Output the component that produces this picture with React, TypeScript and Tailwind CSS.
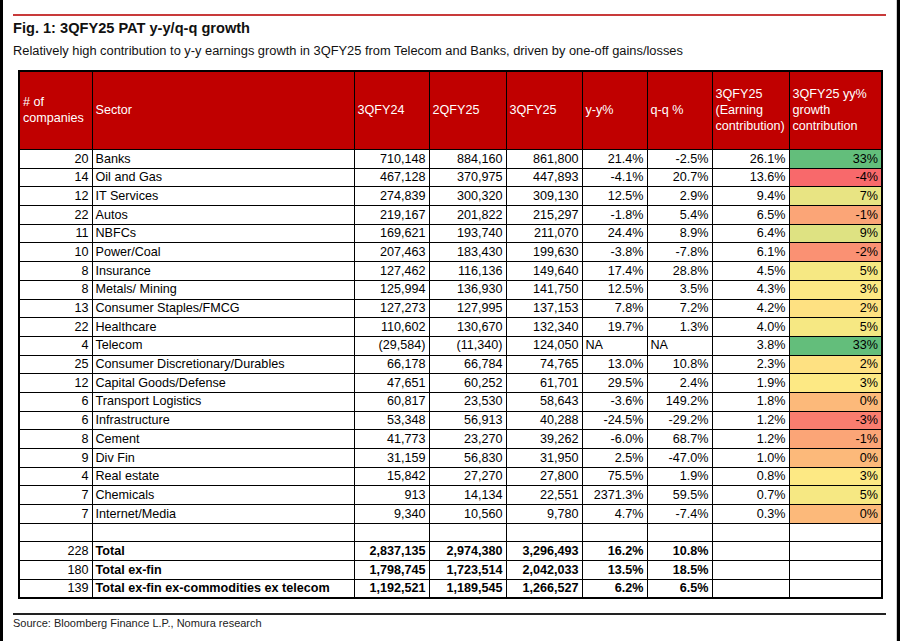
import React from 'react';

type Row = {
  n: string;
  sector: string;
  q324: string;
  q225: string;
  q325: string;
  yy: string;
  qq: string;
  earn: string;
  contrib: string;
  tone: string;
};

const rows: Row[] = [
  { n: '20', sector: 'Banks', q324: '710,148', q225: '884,160', q325: '861,800', yy: '21.4%', qq: '-2.5%', earn: '26.1%', contrib: '33%', tone: 'bg-[#63be7b]' },
  { n: '14', sector: 'Oil and Gas', q324: '467,128', q225: '370,975', q325: '447,893', yy: '-4.1%', qq: '20.7%', earn: '13.6%', contrib: '-4%', tone: 'bg-[#f8696b]' },
  { n: '12', sector: 'IT Services', q324: '274,839', q225: '300,320', q325: '309,130', yy: '12.5%', qq: '2.9%', earn: '9.4%', contrib: '7%', tone: 'bg-[#e8e483]' },
  { n: '22', sector: 'Autos', q324: '219,167', q225: '201,822', q325: '215,297', yy: '-1.8%', qq: '5.4%', earn: '6.5%', contrib: '-1%', tone: 'bg-[#fba577]' },
  { n: '11', sector: 'NBFCs', q324: '169,621', q225: '193,740', q325: '211,070', yy: '24.4%', qq: '8.9%', earn: '6.4%', contrib: '9%', tone: 'bg-[#dee282]' },
  { n: '10', sector: 'Power/Coal', q324: '207,463', q225: '183,430', q325: '199,630', yy: '-3.8%', qq: '-7.8%', earn: '6.1%', contrib: '-2%', tone: 'bg-[#fa9173]' },
  { n: '8', sector: 'Insurance', q324: '127,462', q225: '116,136', q325: '149,640', yy: '17.4%', qq: '28.8%', earn: '4.5%', contrib: '5%', tone: 'bg-[#f6e883]' },
  { n: '8', sector: 'Metals/ Mining', q324: '125,994', q225: '136,930', q325: '141,750', yy: '12.5%', qq: '3.5%', earn: '4.3%', contrib: '3%', tone: 'bg-[#fde984]' },
  { n: '13', sector: 'Consumer Staples/FMCG', q324: '127,273', q225: '127,995', q325: '137,153', yy: '7.8%', qq: '7.2%', earn: '4.2%', contrib: '2%', tone: 'bg-[#fee182]' },
  { n: '22', sector: 'Healthcare', q324: '110,602', q225: '130,670', q325: '132,340', yy: '19.7%', qq: '1.3%', earn: '4.0%', contrib: '5%', tone: 'bg-[#f6e883]' },
  { n: '4', sector: 'Telecom', q324: '(29,584)', q225: '(11,340)', q325: '124,050', yy: 'NA', qq: 'NA', earn: '3.8%', contrib: '33%', tone: 'bg-[#63be7b]' },
  { n: '25', sector: 'Consumer Discretionary/Durables', q324: '66,178', q225: '66,784', q325: '74,765', yy: '13.0%', qq: '10.8%', earn: '2.3%', contrib: '2%', tone: 'bg-[#fee182]' },
  { n: '12', sector: 'Capital Goods/Defense', q324: '47,651', q225: '60,252', q325: '61,701', yy: '29.5%', qq: '2.4%', earn: '1.9%', contrib: '3%', tone: 'bg-[#fde984]' },
  { n: '6', sector: 'Transport Logistics', q324: '60,817', q225: '23,530', q325: '58,643', yy: '-3.6%', qq: '149.2%', earn: '1.8%', contrib: '0%', tone: 'bg-[#fcb97a]' },
  { n: '6', sector: 'Infrastructure', q324: '53,348', q225: '56,913', q325: '40,288', yy: '-24.5%', qq: '-29.2%', earn: '1.2%', contrib: '-3%', tone: 'bg-[#f97d6f]' },
  { n: '8', sector: 'Cement', q324: '41,773', q225: '23,270', q325: '39,262', yy: '-6.0%', qq: '68.7%', earn: '1.2%', contrib: '-1%', tone: 'bg-[#fba577]' },
  { n: '9', sector: 'Div Fin', q324: '31,159', q225: '56,830', q325: '31,950', yy: '2.5%', qq: '-47.0%', earn: '1.0%', contrib: '0%', tone: 'bg-[#fcb97a]' },
  { n: '4', sector: 'Real estate', q324: '15,842', q225: '27,270', q325: '27,800', yy: '75.5%', qq: '1.9%', earn: '0.8%', contrib: '3%', tone: 'bg-[#fde984]' },
  { n: '7', sector: 'Chemicals', q324: '913', q225: '14,134', q325: '22,551', yy: '2371.3%', qq: '59.5%', earn: '0.7%', contrib: '5%', tone: 'bg-[#f6e883]' },
  { n: '7', sector: 'Internet/Media', q324: '9,340', q225: '10,560', q325: '9,780', yy: '4.7%', qq: '-7.4%', earn: '0.3%', contrib: '0%', tone: 'bg-[#fcb97a]' },
];

const totals = [
  { n: '228', sector: 'Total', q324: '2,837,135', q225: '2,974,380', q325: '3,296,493', yy: '16.2%', qq: '10.8%' },
  { n: '180', sector: 'Total ex-fin', q324: '1,798,745', q225: '1,723,514', q325: '2,042,033', yy: '13.5%', qq: '18.5%' },
  { n: '139', sector: 'Total ex-fin ex-commodities ex telecom', q324: '1,192,521', q225: '1,189,545', q325: '1,266,527', yy: '6.2%', qq: '6.5%' },
];

const cell = 'border border-black px-[3px] py-0 leading-none';
const num = `${cell} text-right`;
const head = 'border border-black bg-[#c00000] px-[3px] text-left align-middle font-normal leading-[16px] text-white';

export default function App() {
  return (
    <div className="flex h-[641px] w-[900px] overflow-hidden bg-white font-['Liberation_Sans',Arial,sans-serif] text-[#111]">
      <div className="w-[3px] bg-black" />
      <main className="flex w-[893px] flex-col pl-[10px] pt-[14px]">
        <div className="h-[1.5px] w-[873px] bg-[#c83a3a]" />
        <h1 className="mt-[4px] text-[14.6px] font-bold leading-[17px]">Fig. 1: 3QFY25 PAT y-y/q-q growth</h1>
        <p className="mt-[6px] text-[12.85px] leading-[15px]">
          Relatively high contribution to y-y earnings growth in 3QFY25 from Telecom and Banks, driven by one-off gains/losses
        </p>
        <table className="mt-[12px] ml-[5px] w-[863px] table-fixed border-collapse border-2 border-black text-[12.6px] text-black">
          <colgroup>
            <col className="w-[73px]" />
            <col className="w-[262px]" />
            <col className="w-[75px]" />
            <col className="w-[77px]" />
            <col className="w-[76px]" />
            <col className="w-[65px]" />
            <col className="w-[65px]" />
            <col className="w-[77px]" />
            <col className="w-[93px]" />
          </colgroup>
          <thead>
            <tr className="h-[79px]">
              <th className={head}>
                # of
                <br />
                companies
              </th>
              <th className={head}>Sector</th>
              <th className={head}>3QFY24</th>
              <th className={head}>2QFY25</th>
              <th className={head}>3QFY25</th>
              <th className={head}>y-y%</th>
              <th className={head}>q-q %</th>
              <th className={head}>
                3QFY25
                <br />
                (Earning
                <br />
                contribution)
              </th>
              <th className={head}>
                3QFY25 yy%
                <br />
                growth
                <br />
                contribution
              </th>
            </tr>
          </thead>
          <tbody>
            {rows.map((r) => (
              <tr key={r.sector} className="h-[18.7px]">
                <td className={num}>{r.n}</td>
                <td className={cell}>{r.sector}</td>
                <td className={num}>{r.q324}</td>
                <td className={num}>{r.q225}</td>
                <td className={num}>{r.q325}</td>
                <td className={r.yy === 'NA' ? cell : num}>{r.yy}</td>
                <td className={r.qq === 'NA' ? cell : num}>{r.qq}</td>
                <td className={num}>{r.earn}</td>
                <td className={`${num} ${r.tone}`}>{r.contrib}</td>
              </tr>
            ))}
            <tr className="h-[18.7px]">
              {Array.from({ length: 9 }).map((_, i) => (
                <td key={i} className={cell} />
              ))}
            </tr>
            {totals.map((t) => (
              <tr key={t.sector} className="h-[18.7px]">
                <td className={num}>{t.n}</td>
                <td className={`${cell} font-bold`}>{t.sector}</td>
                <td className={`${num} font-bold`}>{t.q324}</td>
                <td className={`${num} font-bold`}>{t.q225}</td>
                <td className={`${num} font-bold`}>{t.q325}</td>
                <td className={`${num} font-bold`}>{t.yy}</td>
                <td className={`${num} font-bold`}>{t.qq}</td>
                <td className={cell} />
                <td className={cell} />
              </tr>
            ))}
          </tbody>
        </table>
        <div className="mt-[14px] h-[1.5px] w-[873px] bg-[#222]" />
        <p className="mt-[2px] text-[11px] leading-[13px] text-[#222]">Source: Bloomberg Finance L.P., Nomura research</p>
      </main>
      <div className="w-px bg-[#cfcfcf]" />
      <div className="w-[3px] bg-black" />
    </div>
  );
}
